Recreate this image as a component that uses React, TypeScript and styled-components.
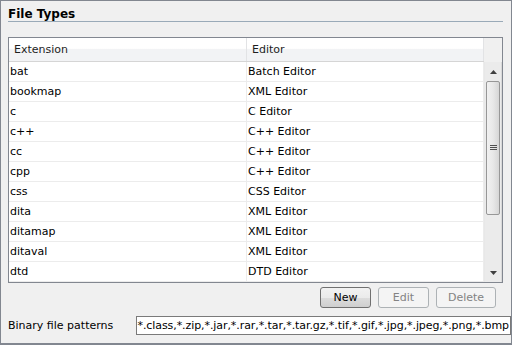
import React from 'react';
import styled, {createGlobalStyle} from 'styled-components';

const GlobalStyle = createGlobalStyle`
    html, body {
        margin: 0;
        padding: 0;
        background: #f0f0f0;
    }
`

const rows = [
    ['bat', 'Batch Editor'],
    ['bookmap', 'XML Editor'],
    ['c', 'C Editor'],
    ['c++', 'C++ Editor'],
    ['cc', 'C++ Editor'],
    ['cpp', 'C++ Editor'],
    ['css', 'CSS Editor'],
    ['dita', 'XML Editor'],
    ['ditamap', 'XML Editor'],
    ['ditaval', 'XML Editor'],
    ['dtd', 'DTD Editor'],
]

export default function App() {
    return (
        <>
            <GlobalStyle/>
            <Window>
                <Title>File Types</Title>
                <Table>
                    <TableBody>
                        <HeaderRow>
                            <HeaderCell>Extension</HeaderCell>
                            <HeaderCell>Editor</HeaderCell>
                        </HeaderRow>
                        {rows.map(([ext, editor]) => (
                            <Row key={ext}>
                                <Cell>{ext}</Cell>
                                <Cell>{editor}</Cell>
                            </Row>
                        ))}
                    </TableBody>
                    <ScrollColumn>
                        <Corner/>
                        <ScrollBar>
                            <Arrow>
                                <svg width="7" height="4" viewBox="0 0 7 4"><path d="M0 4 L3.5 0 L7 4 Z" fill="#404040"/></svg>
                            </Arrow>
                            <Track>
                                <Thumb>
                                    <svg width="7" height="6" viewBox="0 0 7 6">
                                        <path d="M0 0.5H7M0 2.5H7M0 4.5H7" stroke="#505050" strokeWidth="1"/>
                                    </svg>
                                </Thumb>
                            </Track>
                            <Arrow>
                                <svg width="7" height="4" viewBox="0 0 7 4"><path d="M0 0 L3.5 4 L7 0 Z" fill="#404040"/></svg>
                            </Arrow>
                        </ScrollBar>
                    </ScrollColumn>
                </Table>
                <ButtonRow>
                    <Button>New</Button>
                    <Button disabled>Edit</Button>
                    <Button disabled wide>Delete</Button>
                </ButtonRow>
                <PatternRow>
                    <Label>Binary file patterns</Label>
                    <Input>
                        <span>*.class,*.zip,*.jar,*.rar,*.tar,*.tar.gz,*.tif,*.gif,*.jpg,*.jpeg,*.png,*.bmp</span>
                    </Input>
                </PatternRow>
            </Window>
        </>
    );
}

const Window = styled.div`
    width: 512px;
    height: 345px;
    box-sizing: border-box;
    border: 1px solid #828790;
    border-bottom-width: 2px;
    background: #f0f0f0;
    font-family: "DejaVu Sans", sans-serif;
    font-size: 11px;
    color: #000;
    padding: 6px 0 0 7px;
    display: flex;
    flex-direction: column;
`

const Title = styled.div`
    font-weight: bold;
    font-size: 12px;
    width: 495px;
    height: 14px;
    line-height: 15px;
    border-bottom: 1px solid #9aaab8;
`

const Table = styled.div`
    margin-top: 15px;
    width: 495px;
    height: 246px;
    box-sizing: border-box;
    border: 1px solid #828790;
    background: #fff;
    display: flex;
`

const TableBody = styled.div`
    flex: 1;
    overflow: hidden;
`

const HeaderRow = styled.div`
    display: grid;
    grid-template-columns: 238px 1fr;
    height: 24px;
    background: linear-gradient(#ffffff 0%, #ffffff 45%, #f2f3f5 50%, #f2f3f5 100%);
    border-bottom: 1px solid #d5d5d5;
    box-sizing: border-box;
`

const HeaderCell = styled.div`
    padding: 0 0 0 5px;
    line-height: 23px;
    color: #1e1e1e;
    border-right: 1px solid #e2e3e5;
`

const Row = styled.div`
    display: grid;
    grid-template-columns: 238px 1fr;
    height: 20px;
    box-sizing: border-box;
    border-bottom: 1px solid #ececec;
`

const Cell = styled.div`
    padding-left: 1px;
    line-height: 19px;
    white-space: nowrap;
    border-right: 1px solid #ececec;
`

const ScrollColumn = styled.div`
    width: 18px;
    display: flex;
    flex-direction: column;
    background: #f0f0f0;
`

const Corner = styled.div`
    height: 24px;
    background: #f0f0f0;
`

const ScrollBar = styled.div`
    flex: 1;
    display: flex;
    flex-direction: column;
    background: #ebebeb;
    border-left: 1px solid #e8e8e8;
    border-right: 1px solid #d9d9d9;
`

const Arrow = styled.div`
    height: 19px;
    display: flex;
    align-items: center;
    justify-content: center;
`

const Track = styled.div`
    flex: 1;
    padding: 0 1px;
`

const Thumb = styled.div`
    height: 134px;
    box-sizing: border-box;
    border: 1px solid #979797;
    border-radius: 2px;
    background: linear-gradient(90deg, #f1f1f1 0%, #e8e8e8 50%, #d6d6d6 100%);
    display: flex;
    align-items: center;
    justify-content: center;
`

const ButtonRow = styled.div`
    display: flex;
    justify-content: flex-end;
    gap: 7px;
    width: 488px;
    margin-top: 4px;
`

const Button = styled.button<{ wide?: boolean }>`
    width: ${p => (p.wide ? 60 : 51)}px;
    height: 21px;
    box-sizing: border-box;
    border: 1px solid ${p => (p.disabled ? '#adb2b5' : '#707070')};
    border-radius: 3px;
    background: ${p => (p.disabled ? '#f4f4f4' : 'linear-gradient(#f2f2f2 0%, #ebebeb 50%, #dddddd 51%, #cfcfcf 100%)')};
    color: ${p => (p.disabled ? '#838383' : '#000')};
    font-family: "DejaVu Sans", sans-serif;
    font-size: 11px;
    padding: 0;
`

const PatternRow = styled.div`
    display: flex;
    align-items: center;
    margin-top: 8px;
`

const Label = styled.div`
    width: 128px;
`

const Input = styled.div`
    width: 375px;
    height: 19px;
    box-sizing: border-box;
    border: 1px solid #7a7a7a;
    background: #fff;
    line-height: 17px;
    padding-right: 1px;
    white-space: nowrap;
    overflow: hidden;
    display: flex;
    justify-content: flex-end;
    letter-spacing: -0.08px;

    span {
        flex-shrink: 0;
    }
`
